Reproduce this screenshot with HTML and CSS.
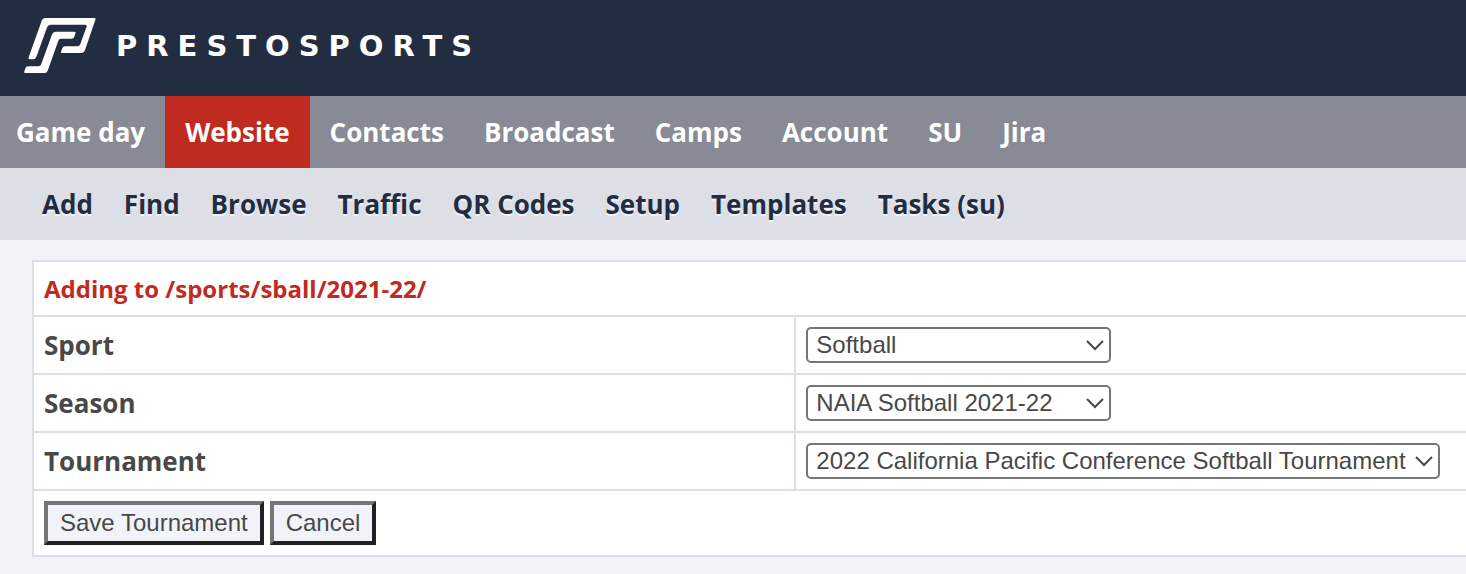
FILE: index.html
```html
<!DOCTYPE html>
<html lang="en">

<head>
    <meta charset="UTF-8">
    <meta name="viewport" content="width=device-width, initial-scale=1.0">
    <title>PrestoSports - Add Tournament</title>
    <link rel="stylesheet" href="styles.css">
</head>

<body>
    <header class="header">
        <a href="#" class="logo">
            <svg class="logo-mark" width="72" height="56" viewBox="0 0 72 56" aria-hidden="true">
                <path d="M21 0H70.500Q72 0 71.500 1.500L61 32Q60 35 57 35H38Q36.500 35 37 33.500L38.200 30.500Q39 28.300 41 28.300H53.500Q55.500 28.300 56.300 26L62.500 9Q63.200 6.800 61 6.800H26.500Q24 6.800 23 9.500L12.500 38.500Q11.600 41.300 9 41.300H5.500Q4 41.300 4.600 39.500L17.800 2.500Q18.700 0 21 0Z" />
                <path d="M31.500 13.700H50.500Q52 13.700 51.400 15.500L50.400 18.500Q49.600 20.700 47.500 20.700H37Q35 20.700 34.200 23L23.800 52.500Q22.900 55 20.500 55H1Q-.300 55 .300 53.500L1.300 50.500Q2 48.300 4.500 48.300H14.500Q16.500 48.300 17.200 46.300L28 16.500Q29 13.700 31.500 13.700Z" />
            </svg>
            <span class="logo-text">PRESTOSPORTS</span>
        </a>
    </header>

    <nav class="main-nav">
        <a href="#">Game day</a>
        <a href="#" class="active">Website</a>
        <a href="#">Contacts</a>
        <a href="#">Broadcast</a>
        <a href="#">Camps</a>
        <a href="#">Account</a>
        <a href="#">SU</a>
        <a href="#">Jira</a>
    </nav>

    <nav class="sub-nav">
        <a href="#">Add</a>
        <a href="#">Find</a>
        <a href="#">Browse</a>
        <a href="#">Traffic</a>
        <a href="#">QR Codes</a>
        <a href="#">Setup</a>
        <a href="#">Templates</a>
        <a href="#">Tasks (su)</a>
    </nav>

    <form class="content">
        <table class="form-table">
            <tr>
                <th colspan="2" class="title">Adding to /sports/sball/2021-22/</th>
            </tr>
            <tr>
                <th class="name"><label for="sport">Sport</label></th>
                <td>
                    <div class="select">
                        <select id="sport" class="short">
                            <option>Softball</option>
                        </select>
                        <svg class="arrow" width="18" height="12" viewBox="0 0 18 12" aria-hidden="true"><path d="M1 2L9 10L17 2" /></svg>
                    </div>
                </td>
            </tr>
            <tr>
                <th class="name"><label for="season">Season</label></th>
                <td>
                    <div class="select">
                        <select id="season" class="short">
                            <option>NAIA Softball 2021-22</option>
                        </select>
                        <svg class="arrow" width="18" height="12" viewBox="0 0 18 12" aria-hidden="true"><path d="M1 2L9 10L17 2" /></svg>
                    </div>
                </td>
            </tr>
            <tr>
                <th class="name"><label for="tournament">Tournament</label></th>
                <td>
                    <div class="select">
                        <select id="tournament">
                            <option>2022 California Pacific Conference Softball Tournament</option>
                        </select>
                        <svg class="arrow" width="18" height="12" viewBox="0 0 18 12" aria-hidden="true"><path d="M1 2L9 10L17 2" /></svg>
                    </div>
                </td>
            </tr>
            <tr>
                <td colspan="2">
                    <div class="buttons">
                        <button type="submit">Save Tournament</button>
                        <button type="button">Cancel</button>
                    </div>
                </td>
            </tr>
        </table>
    </form>
</body>

</html>
```

FILE: styles.css
```css
* {
    box-sizing: border-box;
}

body {
    margin: 0;
    background-color: #f2f3f8;
    color: #484848;
    font-family: "Open Sans", sans-serif;
    font-size: 26px;
}

a {
    text-decoration: none;
}

.header {
    display: flex;
    align-items: center;
    height: 96px;
    padding: 0 24px 4px;
    background-color: #232d41;
}

.logo {
    display: flex;
    align-items: center;
    gap: 20px;
    color: #fff;
}

.logo-mark {
    fill: #fff;
}

.logo-text {
    font-family: "DejaVu Sans", sans-serif;
    font-size: 29px;
    font-weight: 700;
    letter-spacing: 9px;
}

.main-nav,
.sub-nav {
    display: flex;
    font-weight: 700;
    line-height: 72px;
    white-space: nowrap;
}

.main-nav {
    background-color: #888b96;
}

.main-nav a {
    padding: 0 20px;
    color: #fff;
}

.main-nav a:first-child {
    padding-left: 16px;
}

.main-nav .active {
    background-color: #bf2b20;
}

.sub-nav {
    gap: 31px;
    padding: 0 42px;
    background-color: #dddfe7;
}

.sub-nav a {
    color: #232d41;
    text-shadow: 0 2px 0 #f2f3f8;
}

.content {
    padding: 20px 0 20px 32px;
}

.form-table {
    width: 100%;
    border-collapse: collapse;
    background-color: #fff;
    border: 2px solid #dddfe7;
    border-right: none;
}

.form-table th,
.form-table td {
    padding: 10px;
    border-top: 2px solid #dddfe7;
    text-align: left;
    line-height: 36px;
}

.form-table .title {
    color: #bf2b20;
    font-size: 24px;
    line-height: 33px;
}

.form-table .name {
    width: 53.2%;
    border-right: 2px solid #dddfe7;
}

.select {
    display: flex;
    position: relative;
    width: fit-content;
}

select {
    height: 36px;
    padding: 0 32px 2px 8px;
    appearance: none;
    background-color: #fff;
    border: 2px solid #767676;
    border-radius: 5px;
    color: #484848;
    font-family: "Liberation Sans", sans-serif;
    font-size: 24px;
}

.short {
    width: 305px;
}

/* chevron over the right end of the select */
.arrow {
    position: absolute;
    right: 7px;
    top: 12px;
    fill: none;
    stroke: #484848;
    stroke-width: 2;
    pointer-events: none;
}

.buttons {
    display: flex;
    gap: 6px;
}

button {
    height: 44px;
    padding: 0 12px;
    background-color: #f2f3f8;
    border: 4px solid;
    border-color: #767676 #212121 #212121 #767676;
    color: #484848;
    font-family: "Liberation Sans", sans-serif;
    font-size: 24px;
}
```
